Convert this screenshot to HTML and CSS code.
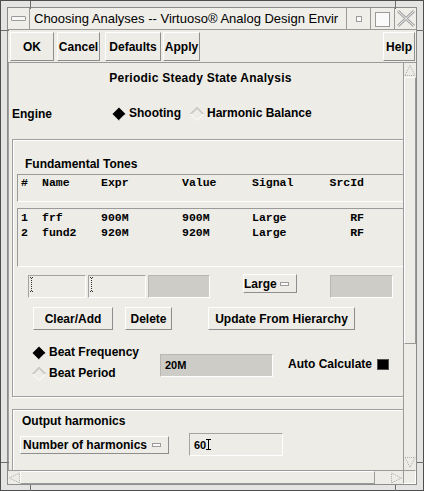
FILE: index.html
```html
<!DOCTYPE html>
<html>
<head>
<meta charset="utf-8">
<title>Choosing Analyses</title>
<link rel="stylesheet" href="styles.css">
</head>
<body>
<div class="win">
  <span class="mark mv" style="left:29px;top:0"></span>
  <span class="mark mv" style="left:394px;top:0"></span>
  <span class="mark mv" style="left:29px;top:484px"></span>
  <span class="mark mv" style="left:394px;top:484px"></span>
  <span class="mark mh" style="left:0;top:29px"></span>
  <span class="mark mh" style="left:0;top:461px"></span>
  <span class="mark mh" style="left:416px;top:29px"></span>
  <span class="mark mh" style="left:416px;top:461px"></span>
  <div class="inner">
    <div class="titlebar">
      <div class="menubtn"><span class="menubar"></span></div>
      <div class="title">Choosing Analyses -- Virtuoso® Analog Design Envir</div>
      <div class="tbtn"><span class="minbox"></span></div>
      <div class="tbtn"><span class="maxbox"></span></div>
      <div class="tbtn close">
        <svg width="20" height="19" viewBox="0 0 20 19"><path d="M2 2 L18 17 M18 2 L2 17" stroke="#a3a3a3" stroke-width="3" fill="none"/><path d="M2 2 L18 17 M18 2 L2 17" stroke="#f2f2f2" stroke-width="1" fill="none"/></svg>
      </div>
    </div>
    <div class="toolbar">
      <div class="btn b-ok">OK</div>
      <div class="btn b-cancel">Cancel</div>
      <div class="btn b-defaults">Defaults</div>
      <div class="btn b-apply">Apply</div>
      <div class="btn b-help">Help</div>
    </div>
    <div class="mid">
      <div class="viewport">
        <div class="content">
          <div class="heading">Periodic Steady State Analysis</div>
          <div class="engine">
            <span class="engine-label">Engine</span>
            <svg class="dia" width="14" height="14" viewBox="0 0 14 14"><path d="M7 0.5 L13.5 7 L7 13.5 L0.5 7Z" fill="#000"/><path d="M13 7.5 L7.5 13" stroke="#fff" fill="none"/></svg>
            <span class="rlabel">Shooting</span>
            <svg class="dia dia2" width="14" height="14" viewBox="0 0 14 14"><path d="M0.5 7 L7 0.5 L13.5 7" stroke="#a8a8a4" fill="none"/><path d="M13.5 7 L7 13.5 L0.5 7" stroke="#ffffff" fill="none"/><path d="M1.8 7 L7 1.8 L12.2 7" stroke="#d6d5d0" fill="none"/></svg>
            <span class="rlabel">Harmonic Balance</span>
          </div>

          <div class="frame ft">
            <div class="ft-title">Fundamental Tones</div>
            <div class="thead">
              <div class="trow">
                <span class="c1">#</span><span class="c2">Name</span><span class="c3">Expr</span><span class="c4">Value</span><span class="c5">Signal</span><span class="c6">SrcId</span>
              </div>
            </div>
            <div class="tbody">
              <div class="trow">
                <span class="c1">1</span><span class="c2">frf</span><span class="c3">900M</span><span class="c4">900M</span><span class="c5">Large</span><span class="c6">RF</span>
              </div>
              <div class="trow">
                <span class="c1">2</span><span class="c2">fund2</span><span class="c3">920M</span><span class="c4">920M</span><span class="c5">Large</span><span class="c6">RF</span>
              </div>
            </div>
            <div class="fields">
              <div class="field f1"><svg class="ibeam" width="4" height="15" viewBox="0 0 4 15"><path d="M0 0.5h4M0 14.5h4M1.5 1v13" stroke="#333" stroke-dasharray="1 1" fill="none"/></svg></div>
              <div class="field f2"><svg class="ibeam" width="4" height="15" viewBox="0 0 4 15"><path d="M0 0.5h4M0 14.5h4M1.5 1v13" stroke="#333" stroke-dasharray="1 1" fill="none"/></svg></div>
              <div class="gfield g1"></div>
              <div class="btn opt o-large">Large<span class="ind"></span></div>
              <div class="gfield g2"></div>
            </div>
            <div class="btnrow">
              <div class="btn b-clear">Clear/Add</div>
              <div class="btn b-delete">Delete</div>
              <div class="btn b-update">Update From Hierarchy</div>
            </div>
            <div class="beat">
              <div class="beat-radios">
                <div class="brow">
                  <svg class="dia" width="14" height="14" viewBox="0 0 14 14"><path d="M7 0.5 L13.5 7 L7 13.5 L0.5 7Z" fill="#000"/><path d="M13 7.5 L7.5 13" stroke="#fff" fill="none"/></svg>
                  <span class="rlabel">Beat Frequency</span>
                </div>
                <div class="brow">
                  <svg class="dia" width="14" height="14" viewBox="0 0 14 14"><path d="M0.5 7 L7 0.5 L13.5 7" stroke="#a8a8a4" fill="none"/><path d="M13.5 7 L7 13.5 L0.5 7" stroke="#ffffff" fill="none"/><path d="M1.8 7 L7 1.8 L12.2 7" stroke="#d6d5d0" fill="none"/></svg>
                  <span class="rlabel">Beat Period</span>
                </div>
              </div>
              <div class="gfield g3">20M</div>
              <div class="auto">Auto Calculate<span class="check"></span></div>
            </div>
          </div>

          <div class="frame oh">
            <div class="oh-title">Output harmonics</div>
            <div class="oh-row">
              <div class="btn opt o-num">Number of harmonics<span class="ind"></span></div>
              <div class="field f60">60<svg class="ibeam2" width="5" height="11" viewBox="0 0 5 11"><path d="M0 0.5h5M0 10.5h5M2.5 0v11" stroke="#000" fill="none"/></svg></div>
            </div>
          </div>
        </div>
      </div>
      <div class="vscroll">
        <div class="sarrow up"><svg width="12" height="12" viewBox="0 0 12 12"><path d="M6 1.5 L11 11.5 L1 11.5Z" stroke="#a9a9a9" stroke-dasharray="1 1" fill="none"/></svg></div>
        <div class="vthumb"></div>
        <div class="vtrough"></div>
        <div class="sarrow down"><svg width="12" height="12" viewBox="0 0 12 12"><path d="M1 0.5 L11 0.5 L6 10.5Z" stroke="#a9a9a9" stroke-dasharray="1 1" fill="none"/></svg></div>
      </div>
    </div>
    <div class="bottom">
      <div class="hscroll">
        <div class="sarrow left"><svg width="12" height="12" viewBox="0 0 12 12"><path d="M1.5 6 L11.5 1 L11.5 11Z" stroke="#a9a9a9" stroke-dasharray="1 1" fill="none"/></svg></div>
        <div class="hthumb"></div>
        <div class="htrough"></div>
        <div class="sarrow right"><svg width="12" height="12" viewBox="0 0 12 12"><path d="M10.5 6 L0.5 1 L0.5 11Z" stroke="#a9a9a9" stroke-dasharray="1 1" fill="none"/></svg></div>
      </div>
      <div class="corner"></div>
    </div>
  </div>
</div>
</body>
</html>
```

FILE: styles.css
```css
* { box-sizing: border-box; }
html, body { margin: 0; padding: 0; }
body {
  width: 424px;
  height: 491px;
  overflow: hidden;
  font-family: "Liberation Sans", Arial, sans-serif;
  font-size: 12px;
  font-weight: bold;
  color: #000;
  background: #dedede;
}

.win {
  position: relative;
  width: 424px;
  height: 491px;
  border: 1px solid #4e4e4e;
  background: #e4e4e2;
  padding: 7px 7px 6px 7px;
}
.mark { position: absolute; background: #6e6e6e; }
.mv { width: 1px; height: 8px; }
.mh { width: 8px; height: 1px; }

.inner {
  height: 476px;
  display: flex;
  flex-direction: column;
  background: #edece6;
  box-shadow: 0 0 0 1px #8c8c8c;
}

/* title bar */
.titlebar {
  height: 22px;
  display: flex;
  border-bottom: 1px solid #9a9a9a;
  background: #efeee9;
}
.menubtn {
  width: 22px;
  border-right: 1px solid #9a9a9a;
  display: flex;
  align-items: center;
  justify-content: center;
}
.menubar {
  width: 15px;
  height: 5px;
  border: 1px solid #9a9a9a;
  border-radius: 1px;
  background: #f7f7f5;
}
.title {
  flex: 1;
  font-weight: normal;
  font-size: 13px;
  line-height: 21px;
  padding-left: 4px;
  white-space: nowrap;
  overflow: hidden;
}
.tbtn {
  width: 24px;
  border-left: 1px solid #9a9a9a;
  display: flex;
  align-items: center;
  justify-content: center;
}
.tbtn.close { width: 22px; }
.minbox {
  width: 6px;
  height: 6px;
  border: 1px solid #9a9a9a;
  background: #fafafa;
}
.maxbox {
  width: 15px;
  height: 15px;
  border: 1px solid #9a9a9a;
  background: #fafafa;
  margin-top: 2px;
}

/* toolbar */
.toolbar {
  height: 33px;
  display: flex;
  align-items: flex-start;
  padding-top: 2px;
  border-bottom: 1px solid #9a9a9a;
}
.btn {
  display: flex;
  align-items: center;
  justify-content: center;
  border: 1px solid;
  border-color: #ffffff #8e8e8e #8e8e8e #ffffff;
  background: #edece6;
  white-space: nowrap;
}
.toolbar .btn { height: 29px; }
.b-ok { margin-left: 2px; width: 44px; }
.b-cancel { margin-left: 3px; width: 43px; }
.b-defaults { margin-left: 5px; width: 56px; }
.b-apply { margin-left: 2px; width: 37px; }
.b-help { margin-left: auto; margin-right: 1px; width: 32px; }

/* middle */
.mid { height: 407px; display: flex; }
.viewport {
  width: 395px;
  overflow: hidden;
  box-shadow: inset 1px 0 0 #a0a0a0;
}
.content { width: 430px; padding-top: 8px; }
.heading {
  width: 385px;
  text-align: center;
  height: 14px;
  line-height: 14px;
  letter-spacing: 0.25px;
}
.engine {
  display: flex;
  align-items: center;
  height: 15px;
  margin-top: 21px;
  padding-left: 4px;
}
.engine-label { width: 100px; }
.dia { display: block; flex: none; }
.rlabel { margin-left: 3px; line-height: 15px; }
.dia2 { margin-left: 9px; }

.frame {
  margin-left: 4px;
  width: 420px;
  border: 1px solid #9f9f9f;
  box-shadow: inset 1px 1px 0 #ffffff, 1px 1px 0 #ffffff;
}
.ft { margin-top: 18px; height: 258px; }
.ft-title {
  margin-top: 17px;
  padding-left: 12px;
  height: 14px;
  line-height: 14px;
}

.thead, .tbody {
  margin-left: 4px;
  border-top: 1px solid #9a9a9a;
  border-left: 1px solid #9a9a9a;
  border-bottom: 1px solid #ffffff;
  padding-left: 3px;
  font-family: "Liberation Mono", "Courier New", monospace;
  font-size: 11.5px;
  font-weight: bold;
}
.thead { margin-top: 3px; height: 28px; padding-top: 1px; }
.thead .trow { line-height: 14px; }
.tbody { margin-top: 6px; height: 59px; padding-top: 1px; }
.tbody .trow { line-height: 15px; }
.trow { display: flex; white-space: pre; }
.c1 { width: 21px; }
.c2 { width: 59px; }
.c3 { width: 81px; }
.c4 { width: 70px; }
.c5 { width: 77px; }
.c6 { width: 35px; text-align: right; }

.fields {
  display: flex;
  align-items: flex-start;
  margin-top: 8px;
  height: 23px;
  padding-left: 15px;
}
.field {
  height: 23px;
  border-top: 1px solid #a3a3a3;
  border-left: 1px solid #a3a3a3;
  border-bottom: 1px solid #ffffff;
  border-right: 1px solid #ffffff;
  background: #edece6;
}
.f1 { width: 58px; }
.f2 { width: 58px; margin-left: 2px; }
.ibeam { display: block; margin: 1px 0 0 1px; }
.gfield {
  height: 23px;
  background: #cdccc6;
  border-top: 1px solid #b8b7b1;
  border-left: 1px solid #b8b7b1;
  border-bottom: 1px solid #ffffff;
  border-right: 1px solid #ffffff;
}
.g1 { width: 62px; margin-left: 2px; }
.opt { justify-content: flex-start; }
.ind {
  width: 9px;
  height: 4px;
  border: 1px solid #9a9a9a;
  background: #fbfbfb;
  margin-left: 3px;
}
.o-large {
  width: 54px;
  height: 19px;
  margin-left: 33px;
  margin-top: -1px;
  padding-left: 0;
}
.g2 { width: 63px; margin-left: 33px; }

.btnrow {
  display: flex;
  margin-top: 9px;
  height: 23px;
  padding-left: 20px;
}
.btnrow .btn { height: 23px; }
.b-clear { width: 80px; }
.b-delete { width: 47px; margin-left: 12px; }
.b-update { width: 147px; margin-left: 36px; }

.beat {
  display: flex;
  align-items: flex-start;
  margin-top: 12px;
}
.beat-radios { width: 147px; padding-left: 19px; }
.brow {
  display: flex;
  align-items: center;
  height: 21px;
}
.g3 {
  width: 113px;
  margin-top: 12px;
  padding-left: 4px;
  font-size: 11px;
  line-height: 20px;
}
.auto {
  display: flex;
  align-items: center;
  margin-left: 15px;
  margin-top: 15px;
  height: 14px;
  white-space: nowrap;
}
.check {
  width: 12px;
  height: 11px;
  background: #000;
  border: 1px solid #505050;
  margin-left: 5px;
}

.oh { margin-top: 12px; height: 80px; }
.oh-title {
  margin-top: 4px;
  padding-left: 9px;
  height: 14px;
  line-height: 14px;
}
.oh-row {
  display: flex;
  align-items: flex-start;
  margin-top: 5px;
  height: 23px;
}
.o-num {
  width: 149px;
  height: 18px;
  margin-left: 7px;
  margin-top: 3px;
  padding-left: 2px;
  padding-right: 7px;
}
.o-num .ind { margin-left: auto; }
.f60 {
  width: 94px;
  margin-left: 20px;
  display: flex;
  align-items: center;
  padding-left: 4px;
  font-size: 11px;
}
.ibeam2 { display: block; margin-left: 0; }

/* scrollbars */
.vscroll {
  width: 13px;
  border-left: 1px solid #9a9a9a;
  display: flex;
  flex-direction: column;
  padding-bottom: 1px;
}
.sarrow { display: flex; align-items: center; justify-content: center; }
.sarrow svg { display: block; }
.vscroll .sarrow { height: 13px; }
.vscroll .sarrow.down { height: 12px; }
.vthumb {
  margin-top: 1px;
  height: 267px;
  border-top: 1px solid #ffffff;
  border-left: 1px solid #ffffff;
  border-right: 1px solid #9a9a9a;
  border-bottom: 1px solid #9a9a9a;
}
.vtrough { flex: 1; }

.bottom { height: 14px; display: flex; }
.hscroll {
  width: 395px;
  display: flex;
  border-top: 1px solid #9a9a9a;
}
.hscroll .sarrow { width: 12px; }
.hthumb {
  width: 355px;
  border-top: 1px solid #ffffff;
  border-left: 1px solid #ffffff;
  border-right: 1px solid #9a9a9a;
  border-bottom: 1px solid #9a9a9a;
}
.htrough { width: 16px; }
.corner {
  width: 13px;
  border: 1px solid #ffffff;
  border-left-color: #9a9a9a;
  border-top-color: #9a9a9a;
}
```
